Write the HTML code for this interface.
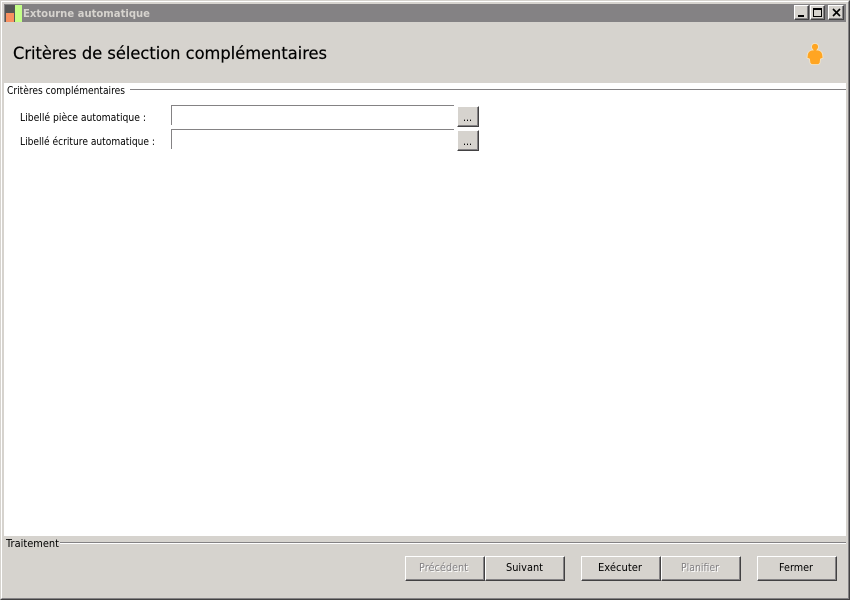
<!DOCTYPE html>
<html lang="fr"><head><meta charset="utf-8"><title>Extourne automatique</title>
<style>
html,body{margin:0;padding:0;background:#d6d3ce}
#w{position:relative;width:850px;height:600px;overflow:hidden;background:#d6d3ce}
#w div{position:absolute;box-sizing:border-box}
.btn{background:#d6d3ce;border-style:solid;border-width:1px;border-color:#fff #424142 #424142 #fff;box-shadow:inset -1px -1px 0 #848284}
svg{position:absolute;left:0;top:0}
text{font-family:"DejaVu Sans",sans-serif}
</style></head><body>
<div id="w">
<div style="left:0;top:0;width:850px;height:600px;border-style:solid;border-width:1px;border-color:#d6d3ce #424142 #424142 #d6d3ce"></div>
<div style="left:1px;top:1px;width:848px;height:598px;border-style:solid;border-width:1px;border-color:#fff #848284 #848284 #fff"></div>
<div style="left:4px;top:4px;width:842px;height:18px;background:#848284"></div>
<div style="left:4px;top:83px;width:842px;height:453px;background:#fff"></div>

<div style="left:130px;top:89px;width:716px;height:1px;background:#848284"></div>
<div style="left:60px;top:542px;width:786px;height:1px;background:#848284"></div>
<div style="left:60px;top:543px;width:786px;height:1px;background:#fff"></div>

<div style="left:171px;top:105px;width:283px;height:1px;background:#848284"></div>
<div style="left:171px;top:105px;width:1px;height:20px;background:#848284"></div>
<div style="left:171px;top:129px;width:283px;height:1px;background:#848284"></div>
<div style="left:171px;top:129px;width:1px;height:20px;background:#848284"></div>

<div class="btn" style="left:457px;top:106px;width:22px;height:21px"></div>
<div class="btn" style="left:457px;top:130px;width:22px;height:21px"></div>

<div class="btn" style="left:405px;top:556px;width:80px;height:25px"></div>
<div class="btn" style="left:485px;top:556px;width:80px;height:25px"></div>
<div class="btn" style="left:581px;top:556px;width:80px;height:25px"></div>
<div class="btn" style="left:661px;top:556px;width:80px;height:25px"></div>
<div class="btn" style="left:757px;top:556px;width:80px;height:25px"></div>

<div class="btn" style="left:794px;top:5px;width:15px;height:15px"></div>
<div class="btn" style="left:810px;top:5px;width:15px;height:15px"></div>
<div class="btn" style="left:828px;top:5px;width:16px;height:15px"></div>

<svg width="850" height="600" viewBox="0 0 850 600">
<rect x="5" y="5" width="10" height="17" fill="#555"/>
<rect x="6" y="13" width="8" height="9" fill="#f89060"/>
<rect x="15" y="5" width="7" height="17" fill="#c4ff88"/>
<rect x="798" y="15" width="6" height="2" fill="#000"/>
<rect x="813.500" y="8.500" width="8" height="8" fill="none" stroke="#000"/>
<rect x="813" y="8" width="9" height="2" fill="#000"/>
<path d="M833 9 L840 16 M840 9 L833 16" stroke="#000" stroke-width="1.600" fill="none"/>
<path d="M812 45 C813 43 817 43 818 45 C819 47 818 49 817 50 C820 50 822 52 822.500 54 L823 58 L820.500 59 L820 63 L818.500 64.500 L811.500 64.500 L810 63 L809.500 59 L807 58 L807.500 54 C808 52 810 50 813 50 C812 49 811 47 812 45 Z" fill="#ffa522" stroke="#f6e6c6" stroke-width=".8"/>

<text x="23" y="17" font-size="11" font-weight="bold" fill="#d6d3ce" textLength="127" lengthAdjust="spacingAndGlyphs">Extourne automatique</text>
<text x="13" y="59" font-size="17" fill="#000" stroke="#000" stroke-width=".2" textLength="314" lengthAdjust="spacingAndGlyphs">Critères de sélection complémentaires</text>
<text x="7" y="94" font-size="11" fill="#000" textLength="118" lengthAdjust="spacingAndGlyphs">Critères complémentaires</text>
<text x="20" y="121" font-size="11" fill="#000" textLength="126" lengthAdjust="spacingAndGlyphs">Libellé pièce automatique :</text>
<text x="20" y="145" font-size="11" fill="#000" textLength="135" lengthAdjust="spacingAndGlyphs">Libellé écriture automatique :</text>
<text x="463" y="121" font-size="11" fill="#000" textLength="9" lengthAdjust="spacingAndGlyphs">...</text>
<text x="463" y="145" font-size="11" fill="#000" textLength="9" lengthAdjust="spacingAndGlyphs">...</text>
<text x="6" y="547" font-size="11" fill="#000" textLength="53" lengthAdjust="spacingAndGlyphs">Traitement</text>
<text x="420" y="572" font-size="11" fill="#fff" textLength="49" lengthAdjust="spacingAndGlyphs">Précédent</text>
<text x="419" y="571" font-size="11" fill="#848284" textLength="49" lengthAdjust="spacingAndGlyphs">Précédent</text>
<text x="506" y="571" font-size="11" fill="#000" textLength="37" lengthAdjust="spacingAndGlyphs">Suivant</text>
<text x="598" y="571" font-size="11" fill="#000" textLength="44" lengthAdjust="spacingAndGlyphs">Exécuter</text>
<text x="682" y="572" font-size="11" fill="#fff" textLength="38" lengthAdjust="spacingAndGlyphs">Planifier</text>
<text x="681" y="571" font-size="11" fill="#848284" textLength="38" lengthAdjust="spacingAndGlyphs">Planifier</text>
<text x="779" y="571" font-size="11" fill="#000" textLength="34" lengthAdjust="spacingAndGlyphs">Fermer</text>
</svg>
</div>
</body></html>
